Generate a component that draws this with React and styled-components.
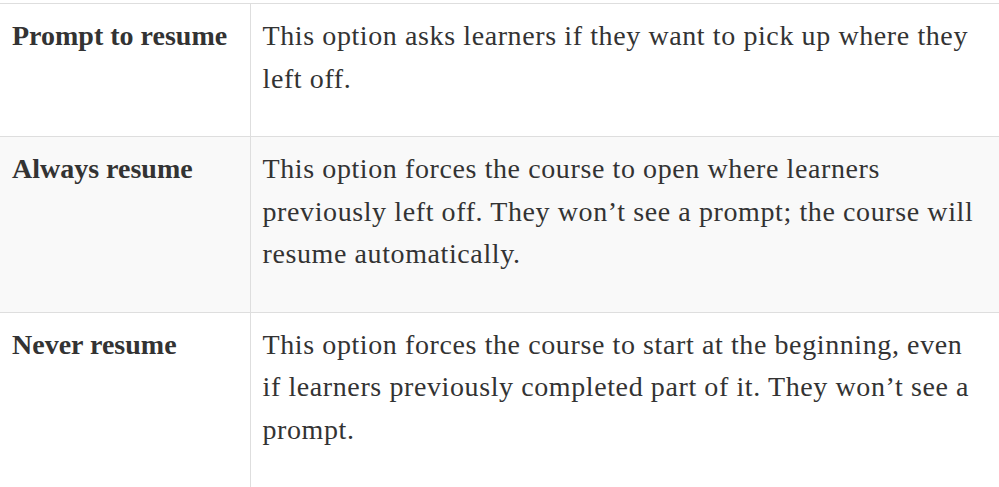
import React from "react";
import styled, { createGlobalStyle } from "styled-components";

const GlobalStyle = createGlobalStyle`
  html, body {
    margin: 0;
    padding: 0;
    background: #fff;
  }
  body {
    font-family: "Liberation Serif", "Times New Roman", serif;
    color: #333;
    overflow: hidden;
  }
`;

const Page = styled.div`
  padding-top: 3px;
  width: 999px;
  overflow: hidden;
`;

const Table = styled.table`
  border-collapse: collapse;
  width: 1000px;
  table-layout: fixed;
`;

const NameCol = styled.col`
  width: 250px;
`;

const Row = styled.tr`
  background: ${(p) => (p.$shaded ? "#f9f9f9" : "#fff")};
  border-top: 1px solid #dedede;
  border-bottom: 1px solid #dedede;
`;

const Cell = styled.td`
  vertical-align: top;
  padding: ${(p) => (p.$head ? "11px 8px 36px 12px" : "11px 15px 36px 12px")};
  font-size: 28px;
  line-height: 42.5px;
  font-weight: ${(p) => (p.$head ? 700 : 400)};
  border-right: ${(p) => (p.$head ? "1px solid #dedede" : "none")};
  letter-spacing: ${(p) => (p.$head ? "0" : "0.6px")};
`;

const rows = [
  {
    name: "Prompt to resume",
    text: "This option asks learners if they want to pick up where they left off.",
  },
  {
    name: "Always resume",
    text: "This option forces the course to open where learners previously left off. They won’t see a prompt; the course will resume automatically.",
  },
  {
    name: "Never resume",
    text: "This option forces the course to start at the beginning, even if learners previously completed part of it. They won’t see a prompt.",
  },
];

export default function App() {
  return (
    <>
      <GlobalStyle />
      <Page>
        <Table>
          <colgroup>
            <NameCol />
            <col />
          </colgroup>
          <tbody>
            {rows.map((r, i) => (
              <Row key={r.name} $shaded={i === 1}>
                <Cell $head>{r.name}</Cell>
                <Cell>{r.text}</Cell>
              </Row>
            ))}
          </tbody>
        </Table>
      </Page>
    </>
  );
}
